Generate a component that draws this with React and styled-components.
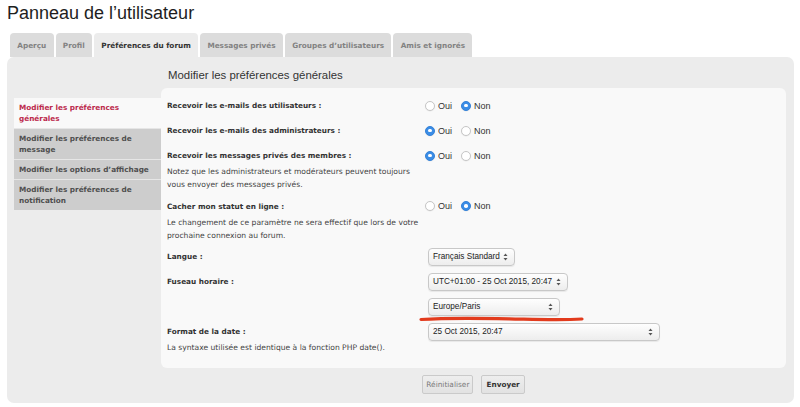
import React from "react";
import styled, { createGlobalStyle } from "styled-components";

const SMALL = `"DejaVu Sans", Verdana, sans-serif`;
const HELV = `"Liberation Sans", Arial, Helvetica, sans-serif`;
const BOLD_SIZE = "7.3px";

const Global = createGlobalStyle`
  html, body { margin: 0; padding: 0; background: #ffffff; }
  body { font-family: ${SMALL}; font-size: 7.6px; color: #333; }
  * { box-sizing: border-box; }
`;

const Page = styled.div`
  width: 800px;
  height: 407px;
  overflow: hidden;
  padding: 0 6px 0 7px;
  position: relative;
`;

const Title = styled.h1`
  margin: 0;
  height: 33px;
  padding: 2px 0 0 0;
  font-family: ${HELV};
  font-weight: normal;
  font-size: 18px;
  line-height: 22px;
  color: #1e1e1e;
`;

const Tabs = styled.div`
  display: flex;
  gap: 2px;
  padding-left: 3px;
  height: 24px;
`;

const Tab = styled.div`
  display: flex;
  align-items: center;
  padding: 1px 7.3px 0;
  border-radius: 4px 4px 0 0;
  background: ${(p) => (p.$active ? "#ececec" : "#dcdcdc")};
  color: ${(p) => (p.$active ? "#333" : "#828282")};
  font-weight: bold;
  font-size: ${BOLD_SIZE};
  white-space: nowrap;
`;

const Panel = styled.div`
  background: #ececec;
  border-radius: 7px;
  padding: 0 8px 9px 7px;
  display: grid;
  grid-template-columns: 147px 1fr;
  grid-template-rows: 31px auto auto;
`;

const Header = styled.div`
  grid-column: 2;
  padding: 11px 0 0 7px;
  font-family: ${HELV};
  font-size: 11.4px;
  line-height: 14px;
  color: #333;
`;

const Menu = styled.div`
  grid-column: 1;
  grid-row: 2;
  margin-top: 10px;
  display: flex;
  flex-direction: column;
  align-self: start;
`;

const MenuItem = styled.div`
  padding: 4px 3px 4px 5px;
  line-height: 11px;
  font-weight: bold;
  font-size: ${BOLD_SIZE};
  white-space: nowrap;
  background: ${(p) => (p.$active ? "#f9f9f9" : "#cdcdcd")};
  color: ${(p) => (p.$active ? "#bc2a4d" : "#4f4f4f")};
  & + & {
    border-top: 1px solid #e6e6e6;
  }
`;

const Inner = styled.div`
  grid-column: 2;
  grid-row: 2;
  background: #f9f9f9;
  border-radius: 6px;
  padding: 5px 6px 12px 6px;
`;

const Field = styled.div`
  display: grid;
  grid-template-columns: 258px 1fr;
  padding: ${(p) => (p.$hint ? "4px 0 2px" : "4px 0")};
  position: relative;
`;

const LabelCol = styled.div``;

const Label = styled.div`
  font-weight: bold;
  font-size: ${BOLD_SIZE};
  line-height: 17px;
  height: 17px;
  color: #333;
`;

const Hint = styled.div`
  margin-top: 1px;
  line-height: 13.3px;
  color: #444;
  white-space: nowrap;
`;

const Control = styled.div`
  display: flex;
  align-items: center;
  height: 17px;
`;

const RadioOpt = styled.label`
  display: flex;
  align-items: center;
  gap: 3px;
  margin-right: 9px;
  font-family: ${HELV};
  font-size: 9px;
  color: #333;
`;

const RadioDot = styled.span`
  width: 10px;
  height: 10px;
  border-radius: 50%;
  display: inline-flex;
  align-items: center;
  justify-content: center;
  background: ${(p) => (p.$on ? "#3b8de6" : "#ffffff")};
  border: 1px solid ${(p) => (p.$on ? "#3582d8" : "#c6c6c6")};
  box-shadow: 0 0.5px 1px rgba(0, 0, 0, 0.08);
  &::after {
    content: "";
    width: 3.5px;
    height: 3.5px;
    border-radius: 50%;
    background: #fff;
    display: ${(p) => (p.$on ? "block" : "none")};
  }
`;

const Select = styled.div`
  margin-left: 3px;
  width: ${(p) => p.$w}px;
  height: 18px;
  display: flex;
  align-items: center;
  justify-content: space-between;
  padding: 0 6px 0 4px;
  border: 1px solid #c8c8c8;
  border-radius: 4px;
  background: linear-gradient(#fefefe, #ededed);
  box-shadow: 0 1px 1px rgba(0, 0, 0, 0.07);
  color: #222;
  font-family: ${HELV};
  font-size: 8.2px;
  white-space: nowrap;
`;

const Buttons = styled.div`
  grid-column: 2;
  grid-row: 3;
  display: flex;
  justify-content: center;
  gap: 8px;
  margin-top: 7px;
`;

const Button = styled.div`
  height: 19px;
  display: flex;
  align-items: center;
  padding: 0 ${(p) => (p.$primary ? "4px" : "3px")};
  border: 1px solid #cacaca;
  border-radius: 2px;
  background: linear-gradient(#eeeeee, #e2e2e2);
  color: ${(p) => (p.$primary ? "#333" : "#7a7a7a")};
  font-weight: ${(p) => (p.$primary ? "bold" : "normal")};
  font-size: ${(p) => (p.$primary ? BOLD_SIZE : "7.4px")};
`;

const Scribble = styled.svg`
  position: absolute;
  left: 252px;
  top: 21px;
  pointer-events: none;
`;

const Arrows = () => (
  <svg width="5" height="8" viewBox="0 0 5 8">
    <path d="M0.5 3 L2.5 0.6 L4.5 3 Z" fill="#555" />
    <path d="M0.5 5 L2.5 7.4 L4.5 5 Z" fill="#555" />
  </svg>
);

const Radios = ({ on }) => (
  <Control>
    <RadioOpt>
      <RadioDot $on={on === "oui"} />
      Oui
    </RadioOpt>
    <RadioOpt>
      <RadioDot $on={on === "non"} />
      Non
    </RadioOpt>
  </Control>
);

const Sel = ({ w, children }) => (
  <Control>
    <Select $w={w}>
      <span>{children}</span>
      <Arrows />
    </Select>
  </Control>
);

export default function App() {
  return (
    <>
      <Global />
      <Page>
        <Title>Panneau de l’utilisateur</Title>
        <Tabs>
          <Tab>Aperçu</Tab>
          <Tab>Profil</Tab>
          <Tab $active>Préférences du forum</Tab>
          <Tab>Messages privés</Tab>
          <Tab>Groupes d’utilisateurs</Tab>
          <Tab>Amis et ignorés</Tab>
        </Tabs>
        <Panel>
          <Header>Modifier les préférences générales</Header>
          <Menu>
            <MenuItem $active>
              Modifier les préférences
              <br />
              générales
            </MenuItem>
            <MenuItem>
              Modifier les préférences de
              <br />
              message
            </MenuItem>
            <MenuItem>Modifier les options d’affichage</MenuItem>
            <MenuItem>
              Modifier les préférences de
              <br />
              notification
            </MenuItem>
          </Menu>
          <Inner>
            <Field>
              <LabelCol>
                <Label>Recevoir les e-mails des utilisateurs :</Label>
              </LabelCol>
              <Radios on="non" />
            </Field>
            <Field>
              <LabelCol>
                <Label>Recevoir les e-mails des administrateurs :</Label>
              </LabelCol>
              <Radios on="oui" />
            </Field>
            <Field $hint>
              <LabelCol>
                <Label>Recevoir les messages privés des membres :</Label>
                <Hint>
                  Notez que les administrateurs et modérateurs peuvent toujours
                  <br />
                  vous envoyer des messages privés.
                </Hint>
              </LabelCol>
              <Radios on="oui" />
            </Field>
            <Field $hint>
              <LabelCol>
                <Label>Cacher mon statut en ligne :</Label>
                <Hint>
                  Le changement de ce paramètre ne sera effectif que lors de votre
                  <br />
                  prochaine connexion au forum.
                </Hint>
              </LabelCol>
              <Radios on="non" />
            </Field>
            <Field>
              <LabelCol>
                <Label>Langue :</Label>
              </LabelCol>
              <Sel w={87}>Français Standard</Sel>
            </Field>
            <Field>
              <LabelCol>
                <Label>Fuseau horaire :</Label>
              </LabelCol>
              <Sel w={140}>UTC+01:00 - 25 Oct 2015, 20:47</Sel>
            </Field>
            <Field>
              <LabelCol>
                <Label />
              </LabelCol>
              <Sel w={132}>Europe/Paris</Sel>
              <Scribble width="166" height="8" viewBox="0 0 166 8">
                <path
                  d="M2 4.5 C 30 2.6, 60 3.2, 90 3.8 S 140 5.2, 163 4"
                  stroke="#e23b1d"
                  strokeWidth="3.2"
                  fill="none"
                  strokeLinecap="round"
                />
              </Scribble>
            </Field>
            <Field $hint>
              <LabelCol>
                <Label>Format de la date :</Label>
                <Hint>La syntaxe utilisée est identique à la fonction PHP date().</Hint>
              </LabelCol>
              <Sel w={232}>25 Oct 2015, 20:47</Sel>
            </Field>
          </Inner>
          <Buttons>
            <Button>Réinitialiser</Button>
            <Button $primary>Envoyer</Button>
          </Buttons>
        </Panel>
      </Page>
    </>
  );
}
